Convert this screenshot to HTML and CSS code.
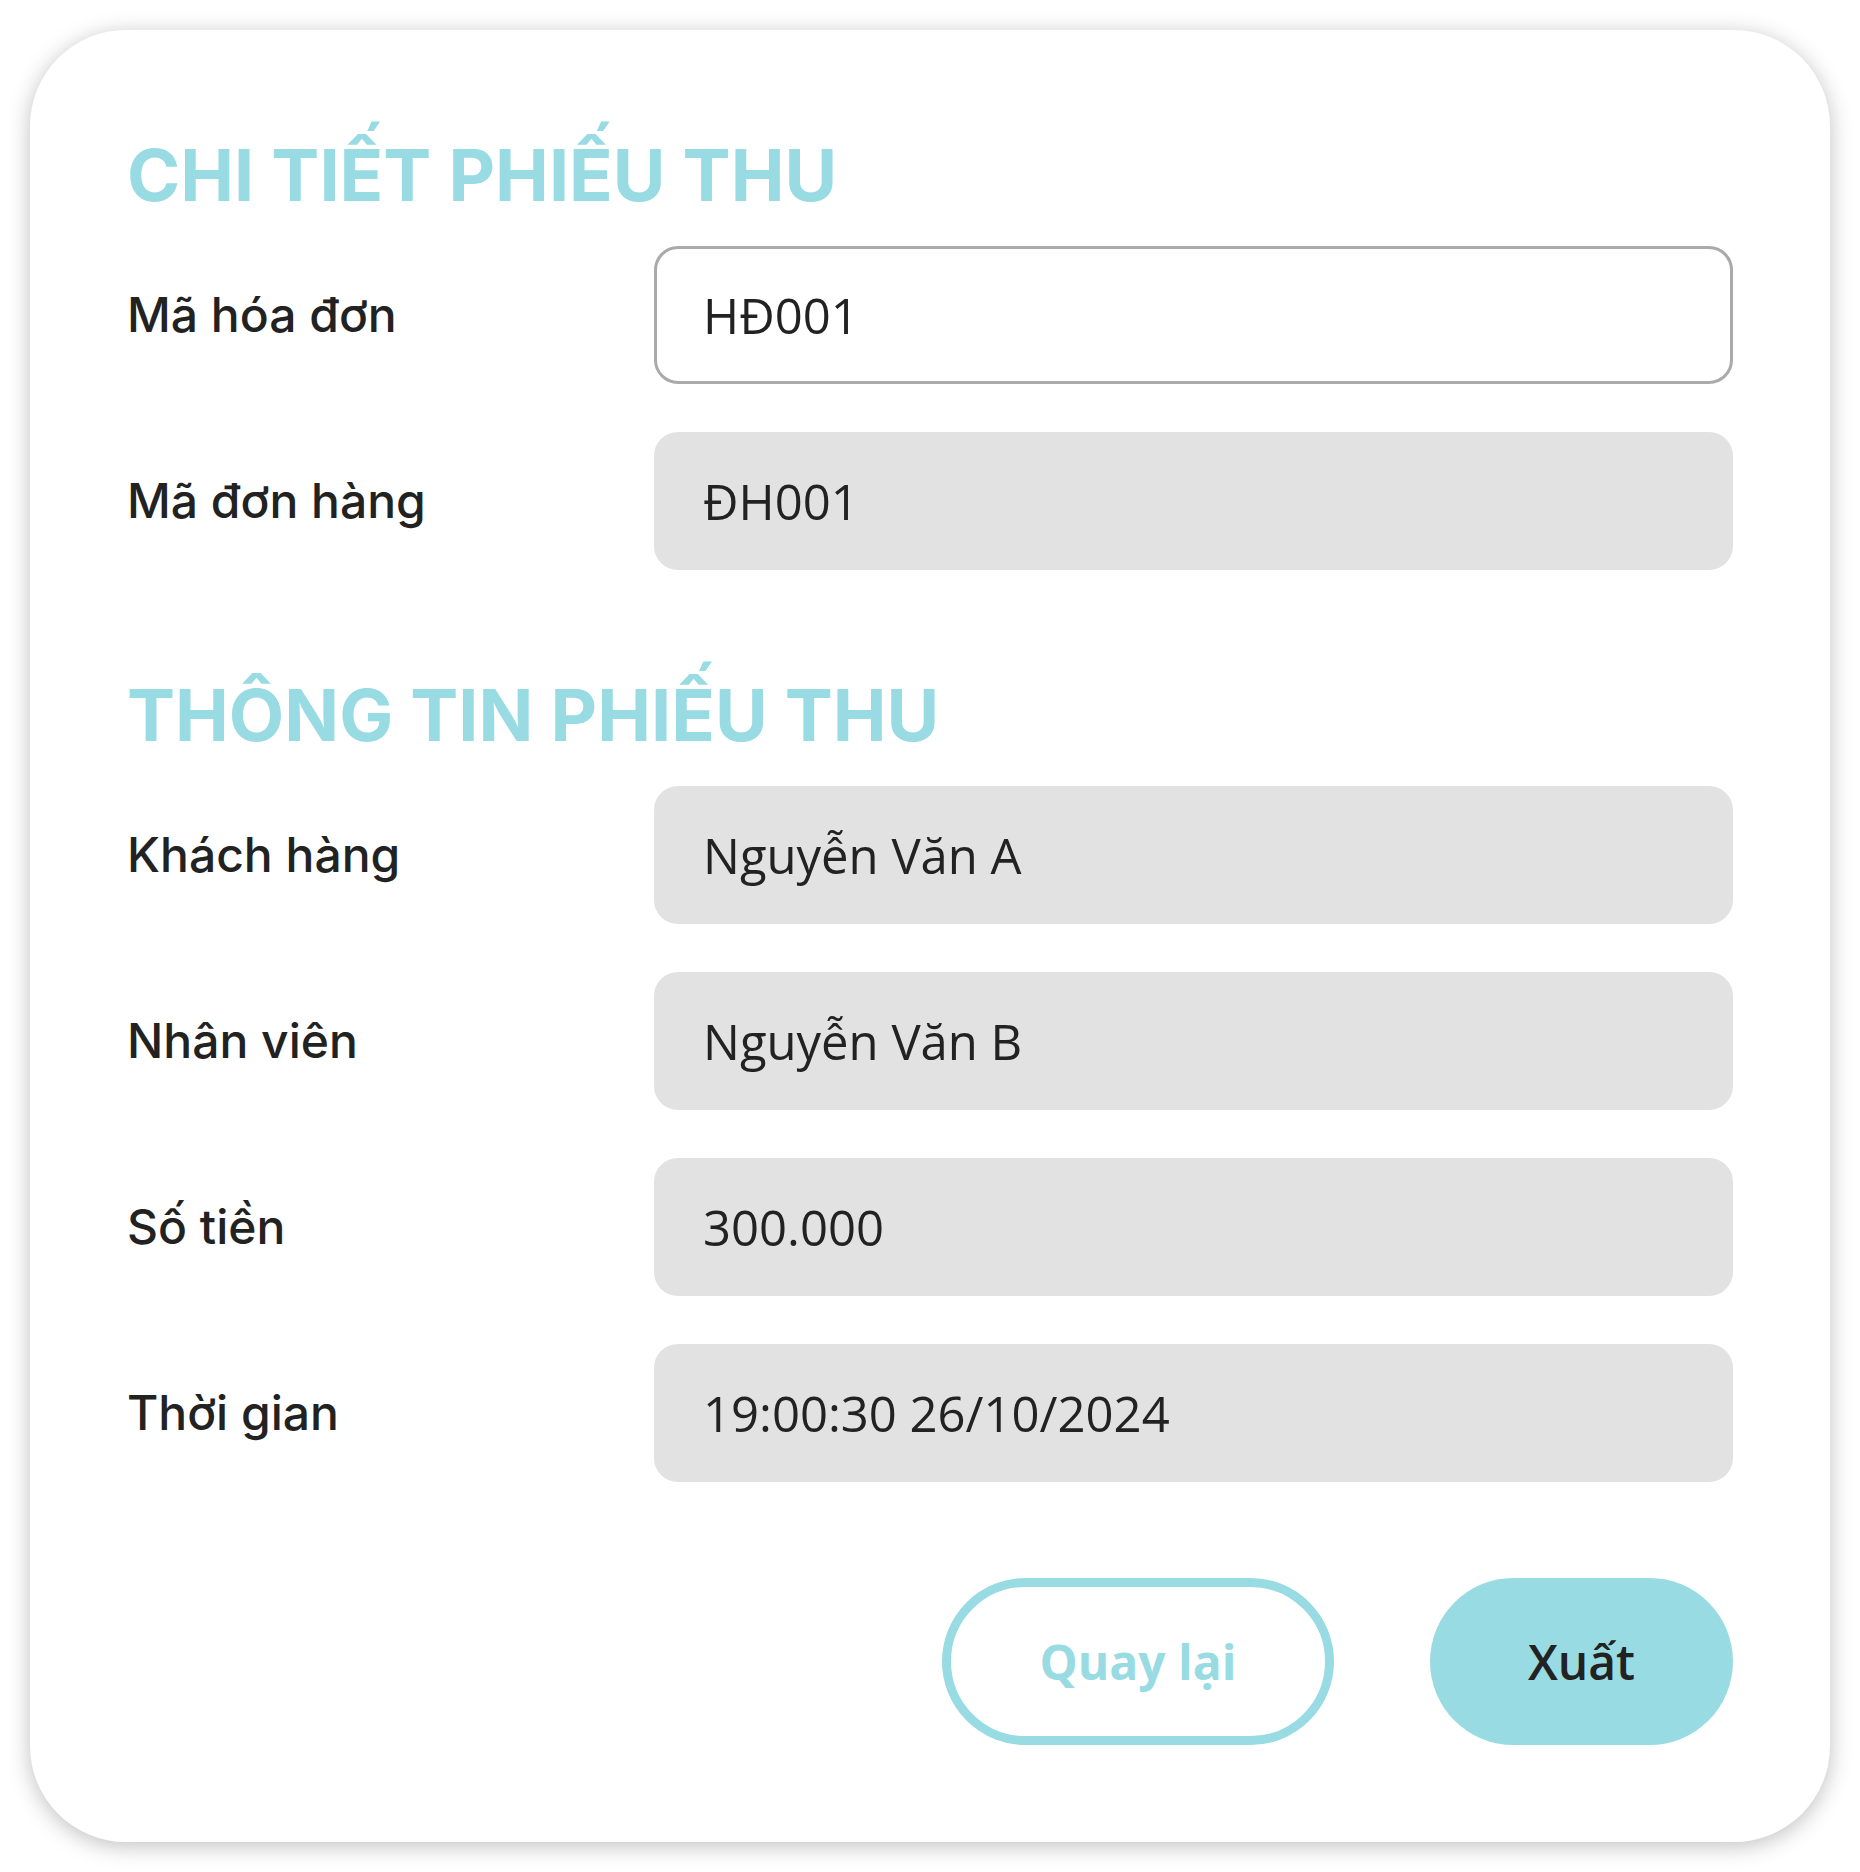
FILE: index.html
```html
<!DOCTYPE html>
<html lang="vi">
<head>
<meta charset="utf-8">
<title>Chi tiết phiếu thu</title>
<link rel="stylesheet" href="styles.css">
</head>
<body>
<main class="card">
  <h1 class="section-title">CHI TIẾT PHIẾU THU</h1>
  <div class="form-group">
    <div class="form-row">
      <label class="form-label">Mã hóa đơn</label>
      <div class="field field--editable">HĐ001</div>
    </div>
    <div class="form-row">
      <label class="form-label">Mã đơn hàng</label>
      <div class="field">ĐH001</div>
    </div>
  </div>

  <h2 class="section-title section-title--second">THÔNG TIN PHIẾU THU</h2>
  <div class="form-group">
    <div class="form-row">
      <label class="form-label">Khách hàng</label>
      <div class="field">Nguyễn Văn A</div>
    </div>
    <div class="form-row">
      <label class="form-label">Nhân viên</label>
      <div class="field">Nguyễn Văn B</div>
    </div>
    <div class="form-row">
      <label class="form-label">Số tiền</label>
      <div class="field">300.000</div>
    </div>
    <div class="form-row">
      <label class="form-label">Thời gian</label>
      <div class="field">19:00:30 26/10/2024</div>
    </div>
  </div>

  <div class="actions">
    <button class="btn btn--outline">Quay lại</button>
    <button class="btn btn--solid">Xuất</button>
  </div>
</main>
</body>
</html>
```

FILE: styles.css
```css
* {
  box-sizing: border-box;
}

html, body {
  margin: 0;
  padding: 0;
  background: #ffffff;
}

body {
  font-family: "Inter", "Noto Sans", sans-serif;
  color: #222222;
}

.card {
  width: 1800px;
  margin: 30px;
  padding: 101px 97px 97px 97px;
  background: #ffffff;
  border-radius: 96px;
  box-shadow: 0 4px 22px rgba(0, 0, 0, 0.25);
}

.section-title {
  margin: 0 0 28px 0;
  font-family: "Inter", "Noto Sans", sans-serif;
  font-weight: 700;
  font-size: 72px;
  line-height: 87px;
  color: #98dbe3;
  letter-spacing: 0;
}

.section-title--second {
  margin-top: 101px;
}

.form-group {
  display: flex;
  flex-direction: column;
  gap: 48px;
}

.form-row {
  display: grid;
  grid-template-columns: 527px 1fr;
  align-items: center;
}

.form-label {
  font-family: "Inter", "Noto Sans", sans-serif;
  font-weight: 500;
  font-size: 48px;
  line-height: 58px;
  color: #222222;
}

.field {
  height: 138px;
  display: flex;
  align-items: center;
  padding-left: 46px;
  border: 3px solid #e2e2e2;
  border-radius: 24px;
  background: #e2e2e2;
  font-family: "Open Sans", "Noto Sans", sans-serif;
  font-size: 49px;
  font-weight: 400;
  color: #222222;
}

.field--editable {
  background: #ffffff;
  border-color: #aaaaaa;
}

.actions {
  display: flex;
  justify-content: flex-end;
  gap: 96px;
  margin-top: 96px;
}

.btn {
  height: 167px;
  border-radius: 999px;
  font-family: "Open Sans", "Noto Sans", sans-serif;
  font-size: 48px;
  display: flex;
  align-items: center;
  justify-content: center;
  cursor: pointer;
  padding: 0;
}

.btn--outline {
  width: 392px;
  background: #ffffff;
  border: 9px solid #98dbe3;
  color: #98dbe3;
  font-weight: 700;
}

.btn--solid {
  width: 303px;
  background: #98dbe3;
  border: none;
  color: #222222;
  font-weight: 600;
}
```
